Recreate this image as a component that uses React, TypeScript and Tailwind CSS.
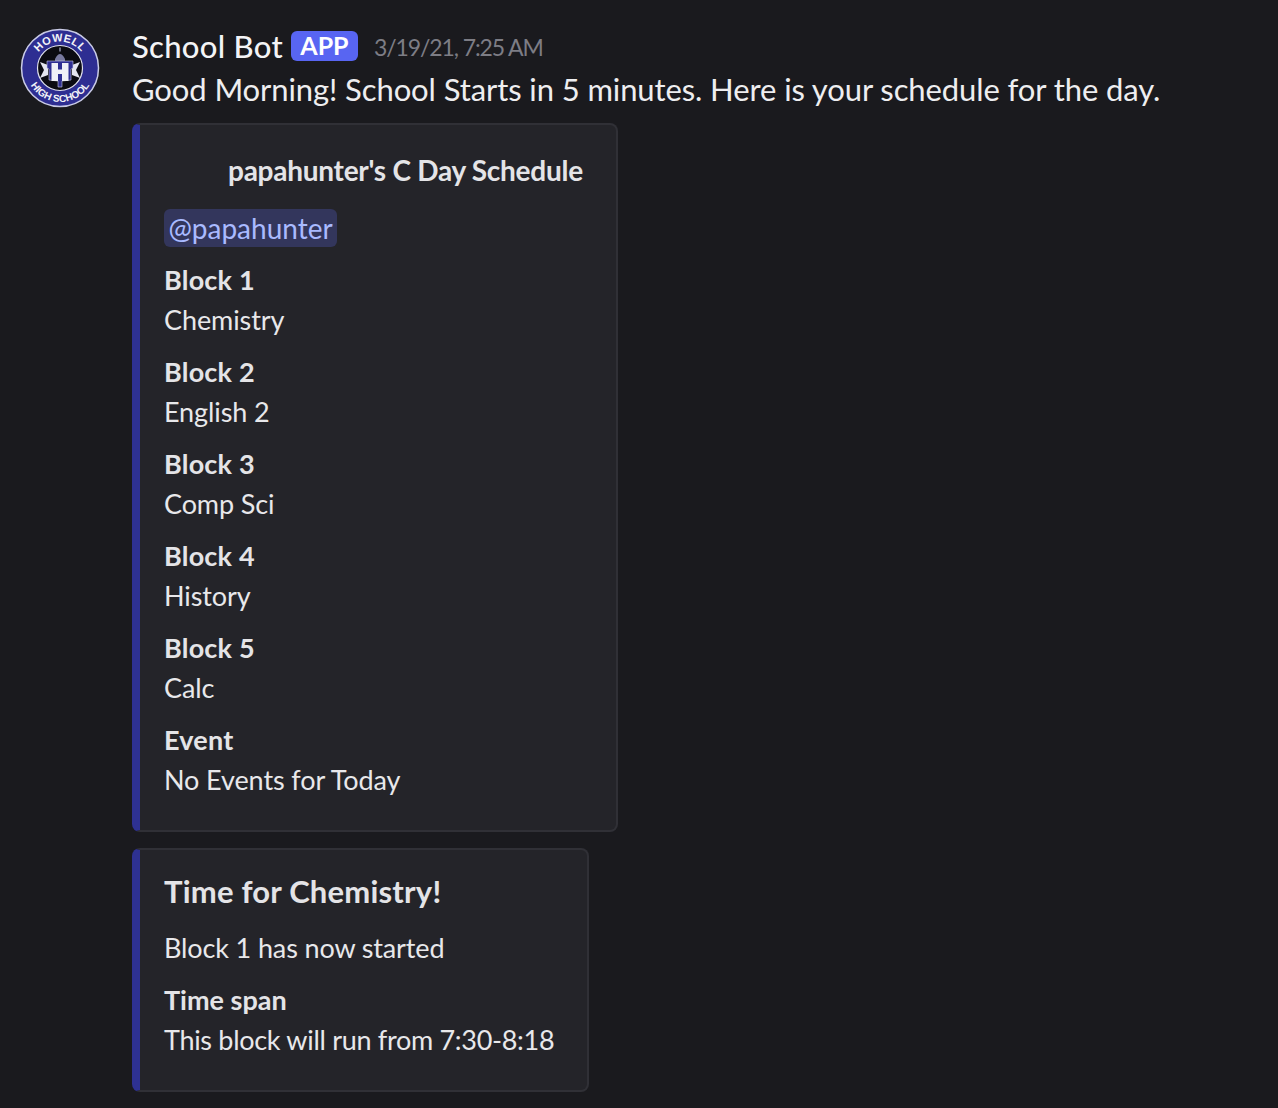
const FIELDS = [
  { name: 'Block 1', value: 'Chemistry' },
  { name: 'Block 2', value: 'English 2' },
  { name: 'Block 3', value: 'Comp Sci' },
  { name: 'Block 4', value: 'History' },
  { name: 'Block 5', value: 'Calc' },
  { name: 'Event', value: 'No Events for Today' },
];

function SchoolLogo() {
  return (
    <svg width="80" height="80" viewBox="0 0 80 80" className="shrink-0">
      <defs>
        <path id="logo-top" d="M 13.5 40 A 26.5 26.5 0 0 1 66.5 40" />
        <path id="logo-bottom" d="M 6 40 A 34 34 0 0 0 74 40" />
      </defs>
      <circle cx="40" cy="40" r="38.5" fill="#2e2e92" stroke="#c9cbe6" strokeWidth="1.5" />
      <circle cx="40" cy="40" r="22.5" fill="#0b0b12" stroke="#e0e1ee" strokeWidth="1.2" />
      {/* maple leaf points behind the crest */}
      <path d="M20 34l8 3v10l-8 3 4-8zM60 34l-8 3v10l8 3-4-8z" fill="#e4e5ef" />
      <path d="M35 31q5-10 10 0v3H35z" fill="#77789f" />
      <path d="M39.4 19.5h1.2v4h-1.2z" fill="#a9aac8" />
      <path d="M27 33h26v7l-2 1v11l-9 1v6h-4v-6l-9-1V41l-2-1z" fill="#2e2e92" stroke="#c9cbe6" strokeWidth="0.6" />
      <path d="M31.5 35h6.5v6.5h4V35h6.5v18H42v-7h-4v7h-6.5z" fill="#eff0f7" />
      <text fill="#f2f3f8" fontSize="11" fontWeight="700" letterSpacing="0.3" style={{ fontFamily: '"Liberation Sans", sans-serif' }}>
        <textPath href="#logo-top" startOffset="50%" textAnchor="middle">HOWELL</textPath>
      </text>
      <text fill="#f2f3f8" fontSize="10" fontWeight="700" style={{ fontFamily: '"Liberation Sans", sans-serif' }}>
        <textPath href="#logo-bottom" startOffset="50%" textAnchor="middle">HIGH SCHOOL</textPath>
      </text>
    </svg>
  );
}

export default function App() {
  return (
    <div className="h-[1108px] w-[1278px] overflow-hidden bg-[#1a1a1e] font-['Lato',sans-serif] text-[#eeeef0]">
      <div className="flex gap-[32px] pl-[20px] pt-[28px]">
        <SchoolLogo />
        <div className="flex flex-col items-start">
          <div className="flex h-[36px] items-center">
            <span className="text-[31px] font-medium tracking-[0.3px] text-[#f4f4f6]">School Bot</span>
            <span className="ml-[8px] flex h-[30px] w-[67px] items-center justify-center rounded-[6px] bg-[#5865f2] text-[25px] font-bold text-white">APP</span>
            <span className="ml-[16px] pt-[3px] text-[23px] tracking-[-1.1px] text-[#7d7d85]">3/19/21, 7:25 AM</span>
          </div>
          <p className="mt-[5px] text-[31px] leading-[40px] tracking-[-0.1px] whitespace-nowrap text-[#eeeef0]">
            Good Morning! School Starts in 5 minutes. Here is your schedule for the day.
          </p>

          <div className="mt-[14px] flex h-[709px] w-[486px] flex-col rounded-[8px] border-2 border-l-8 border-[#303036] border-l-[#2e3192] bg-[#242429] pl-[24px] pt-[27px]">
            <div className="ml-[64px] text-[28px] leading-[36px] font-bold tracking-[-0.26px] whitespace-nowrap text-[#e4e4e7]">papahunter's C Day Schedule</div>
            <div className="mt-[21px] flex h-[38px] w-[173px] items-center justify-center rounded-[6px] bg-[#33365c] text-[28px] text-[#a9baff]">@papahunter</div>
            <div className="mt-[13px] flex flex-col gap-[12px]">
              {FIELDS.map(field => (
                <div key={field.name} className="text-[27px] leading-[40px]">
                  <div className="font-bold tracking-[0.2px] text-[#e4e4e7]">{field.name}</div>
                  <div className="tracking-[-0.1px] text-[#e8e8eb]">{field.value}</div>
                </div>
              ))}
            </div>
          </div>

          <div className="mt-[16px] flex h-[244px] w-[457px] flex-col rounded-[8px] border-2 border-l-8 border-[#303036] border-l-[#2e3192] bg-[#242429] pl-[24px] pt-[21px]">
            <div className="text-[31px] leading-[40px] font-bold tracking-[0.2px] whitespace-nowrap text-[#e4e4e7]">Time for Chemistry!</div>
            <div className="mt-[17px] text-[27px] leading-[40px] tracking-[-0.13px] whitespace-nowrap text-[#e8e8eb]">Block 1 has now started</div>
            <div className="mt-[12px] text-[27px] leading-[40px] font-bold text-[#e4e4e7]">Time span</div>
            <div className="text-[27px] leading-[40px] tracking-[-0.3px] whitespace-nowrap text-[#e8e8eb]">This block will run from 7:30-8:18</div>
          </div>
        </div>
      </div>
    </div>
  );
}
